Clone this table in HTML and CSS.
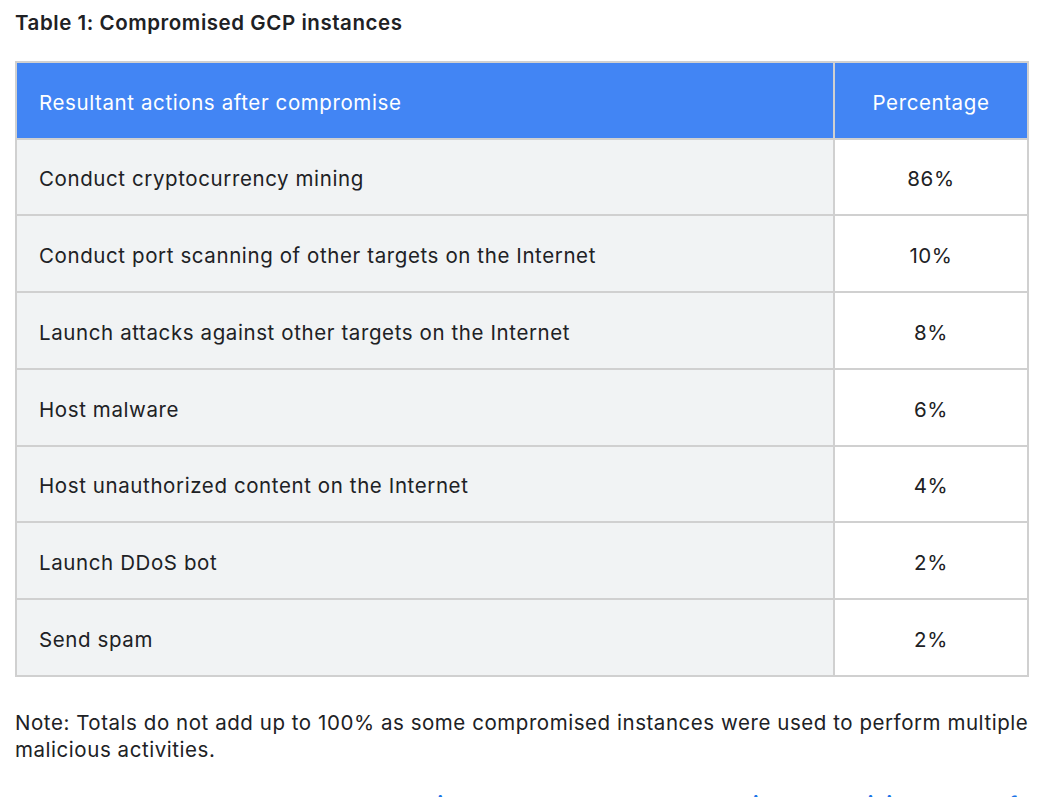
FILE: index.html
```html
<!DOCTYPE html>
<html>
<head>
<meta charset="utf-8">
<link rel="stylesheet" href="styles.css">
</head>
<body>
<div class="page">
  <h3 class="title">Table 1: Compromised GCP instances</h3>
  <table class="data">
    <thead>
      <tr><th class="c-act">Resultant actions after compromise</th><th class="c-pct">Percentage</th></tr>
    </thead>
    <tbody>
      <tr><td class="c-act">Conduct cryptocurrency mining</td><td class="c-pct">86%</td></tr>
      <tr><td class="c-act">Conduct port scanning of other targets on the Internet</td><td class="c-pct">10%</td></tr>
      <tr><td class="c-act">Launch attacks against other targets on the Internet</td><td class="c-pct">8%</td></tr>
      <tr><td class="c-act">Host malware</td><td class="c-pct">6%</td></tr>
      <tr><td class="c-act">Host unauthorized content on the Internet</td><td class="c-pct">4%</td></tr>
      <tr><td class="c-act">Launch DDoS bot</td><td class="c-pct">2%</td></tr>
      <tr><td class="c-act">Send spam</td><td class="c-pct">2%</td></tr>
    </tbody>
  </table>
  <p class="note">Note: Totals do not add up to 100% as some compromised instances were used to perform multiple malicious activities.</p>
  <p class="link-line"><a href="#">All these attacks targeted Google Cloud instances that had been exploited by malicious actors for further</a></p>
</div>
</body>
</html>
```

FILE: styles.css
```css
html, body {
  margin: 0;
  padding: 0;
  background: #ffffff;
}
.page {
  padding: 10px 0 0 15px;
  font-family: Inter, "Noto Sans", sans-serif;
  color: #202124;
}
.title {
  margin: 0 0 25px 0;
  font-size: 20.5px;
  line-height: 26px;
  font-weight: 600;
  letter-spacing: 0.55px;
}
.data {
  border-collapse: collapse;
  width: 1014px;
  border: 2px solid #d0d0d0;
}
.data th, .data td {
  border: 2px solid #d0d0d0;
  font-size: 20.5px;
  letter-spacing: 0.6px;
  line-height: 28px;
  padding: 25.6px 22px 21.15px 22px;
  font-weight: 400;
}
.data th {
  background: #4285f4;
  color: #ffffff;
}
.data .c-act {
  text-align: left;
  width: 772px;
}
.data .c-pct {
  text-align: center;
}
.data td.c-act {
  background: #f1f3f4;
}
.data td.c-pct {
  background: #ffffff;
}
.note {
  margin: 32px 0 0 0;
  font-size: 20.5px;
  letter-spacing: 0.55px;
  line-height: 27px;
}
.link-line {
  margin: 28.5px 0 0 0;
  font-size: 20.5px;
  letter-spacing: 0.55px;
  line-height: 27px;
  font-weight: 700;
}
.link-line a {
  color: #1a73e8;
  text-decoration: none;
}
```
